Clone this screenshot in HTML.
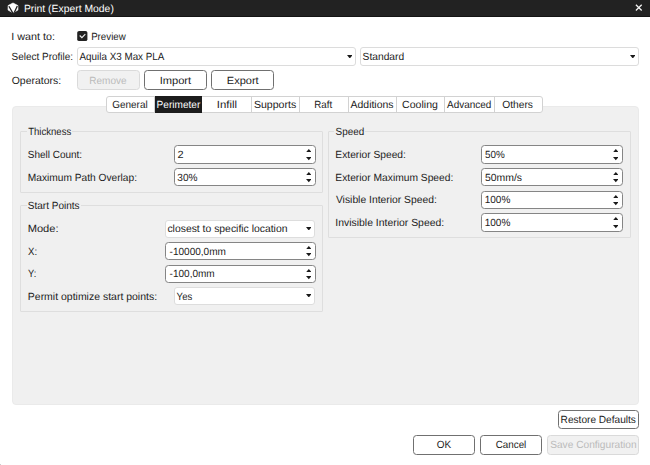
<!DOCTYPE html>
<html><head><meta charset="utf-8"><title>Print (Expert Mode)</title>
<style>
html,body{margin:0;padding:0;}
body{width:650px;height:465px;position:relative;overflow:hidden;background:#fff;font-family:"Liberation Sans","DejaVu Sans",sans-serif;font-size:10.4px;color:#1c1c1c;}
.abs{position:absolute;}
.t{position:absolute;white-space:nowrap;line-height:14px;height:14px;transform-origin:0 50%;text-rendering:geometricPrecision;}
.box{position:absolute;box-sizing:border-box;border:1px solid #cfcfcf;border-radius:3px;background:#fff;}
.box.spin{border-color:#858585;border-radius:3.5px;}
.box.btn{border-color:#707070;border-radius:3.5px;}
.box.btn.dis{border-color:#dadada;background:#f1f1f1;}
.gb{position:absolute;box-sizing:border-box;border:1px solid #dedede;border-radius:1px;}
</style></head><body>
<div class="abs" style="left:0;top:0;width:650px;height:17px;background:#222;border-bottom:1px solid #141414;box-sizing:border-box"></div>
<svg class="abs" style="left:7px;top:2px" width="12" height="12" viewBox="0 0 12 12"><path d="M6 1 L10.9 3.6 L10.9 8.1 L6 10.8 L1.1 8.1 L1.1 3.6 Z" fill="#fff" stroke="#fff" stroke-width="0.7" stroke-linejoin="round"/><path d="M1.9 4.2 L5.7 10.9 L6.6 10.9 M10.3 4.0 L7.3 10.6" fill="none" stroke="#222" stroke-width="1.3"/></svg>
<svg class="abs" style="left:635px;top:4px" width="8" height="8" viewBox="0 0 8 8"><path d="M0.9 0.7 L6.7 6.5 M6.7 0.7 L0.9 6.5" stroke="#f4f4f4" stroke-width="1.25"/></svg>
<svg class="abs" style="left:76px;top:30px" width="14" height="13" viewBox="0 0 14 13"><rect x="1.2" y="0.95" width="10.2" height="10.15" rx="1.9" fill="#222"/><path d="M3.7 5.5 L5.9 7.6 L9.3 4.2" stroke="#ededed" stroke-width="1.15" fill="none"/></svg>
<div class="abs" style="left:0;top:463.6px;width:1.2px;height:1.4px;background:#cdcdcd"></div>
<div class="abs" style="left:12px;top:106px;width:627px;height:298.5px;background:#f0f0f0;border:1px solid #eaeaea;box-sizing:border-box;border-radius:4px"></div>
<div class="abs" style="left:106px;top:96px;width:437px;height:17px;box-sizing:border-box;background:#fff;border:1px solid #d2d2d2;border-radius:3px 3px 3px 3px"></div><div class="abs" style="left:154px;top:97px;width:1px;height:15px;background:#d2d2d2"></div><div class="abs" style="left:251px;top:97px;width:1px;height:15px;background:#d2d2d2"></div><div class="abs" style="left:299px;top:97px;width:1px;height:15px;background:#d2d2d2"></div><div class="abs" style="left:348px;top:97px;width:1px;height:15px;background:#d2d2d2"></div><div class="abs" style="left:396px;top:97px;width:1px;height:15px;background:#d2d2d2"></div><div class="abs" style="left:444px;top:97px;width:1px;height:15px;background:#d2d2d2"></div><div class="abs" style="left:494px;top:97px;width:1px;height:15px;background:#d2d2d2"></div><div class="abs" style="left:155px;top:96px;width:47px;height:17px;background:#1c1c1c"></div>
<div class="gb" style="left:20px;top:131px;width:303px;height:62px"></div><div class="abs" style="left:26.5px;top:130px;width:45.5px;height:3px;background:#f0f0f0"></div>
<div class="gb" style="left:20px;top:205px;width:303px;height:107px"></div><div class="abs" style="left:26.5px;top:204px;width:54px;height:3px;background:#f0f0f0"></div>
<div class="gb" style="left:328px;top:131px;width:303px;height:107px"></div><div class="abs" style="left:334px;top:130px;width:31px;height:3px;background:#f0f0f0"></div>
<div class="box" style="left:77px;top:47px;width:279px;height:19px;border-color:#dcdcdc"></div>
<svg class="abs" style="left:346.5px;top:54.6px" width="5.6" height="3.5" viewBox="0 0 5.6 3.5"><path d="M0 0 L5.6 0 L2.8 3.5 Z" fill="#1a1a1a"/></svg>
<div class="box" style="left:360px;top:47px;width:279px;height:19px;border-color:#dcdcdc"></div>
<svg class="abs" style="left:629.5px;top:54.6px" width="5.6" height="3.5" viewBox="0 0 5.6 3.5"><path d="M0 0 L5.6 0 L2.8 3.5 Z" fill="#1a1a1a"/></svg>
<div class="box btn dis" style="left:77px;top:70px;width:63px;height:20px"></div>
<div class="box btn" style="left:144px;top:70px;width:63px;height:20px"></div>
<div class="box btn" style="left:211px;top:70px;width:63px;height:20px"></div>
<div class="box spin" style="left:174px;top:145px;width:142px;height:19px"></div>
<svg class="abs" style="left:305.9px;top:148.9px" width="5.6" height="3.3" viewBox="0 0 5.6 3.3"><path d="M0 3.3 L5.6 3.3 L2.8 0 Z" fill="#1a1a1a"/></svg>
<svg class="abs" style="left:305.9px;top:157.35px" width="5.6" height="3.2" viewBox="0 0 5.6 3.2"><path d="M0 0 L5.6 0 L2.8 3.2 Z" fill="#1a1a1a"/></svg>
<div class="box spin" style="left:174px;top:168px;width:142px;height:18px"></div>
<svg class="abs" style="left:305.9px;top:171.5px" width="5.6" height="3.3" viewBox="0 0 5.6 3.3"><path d="M0 3.3 L5.6 3.3 L2.8 0 Z" fill="#1a1a1a"/></svg>
<svg class="abs" style="left:305.9px;top:179.35px" width="5.6" height="3.2" viewBox="0 0 5.6 3.2"><path d="M0 0 L5.6 0 L2.8 3.2 Z" fill="#1a1a1a"/></svg>
<div class="box" style="left:165px;top:220px;width:150px;height:18px;border-color:#dddddd"></div>
<svg class="abs" style="left:305.5px;top:226.6px" width="5.6" height="3.5" viewBox="0 0 5.6 3.5"><path d="M0 0 L5.6 0 L2.8 3.5 Z" fill="#1a1a1a"/></svg>
<div class="box spin" style="left:165px;top:242px;width:151px;height:18px"></div>
<svg class="abs" style="left:305.9px;top:245.5px" width="5.6" height="3.3" viewBox="0 0 5.6 3.3"><path d="M0 3.3 L5.6 3.3 L2.8 0 Z" fill="#1a1a1a"/></svg>
<svg class="abs" style="left:305.9px;top:253.35px" width="5.6" height="3.2" viewBox="0 0 5.6 3.2"><path d="M0 0 L5.6 0 L2.8 3.2 Z" fill="#1a1a1a"/></svg>
<div class="box spin" style="left:165px;top:265px;width:151px;height:18px"></div>
<svg class="abs" style="left:305.9px;top:268.5px" width="5.6" height="3.3" viewBox="0 0 5.6 3.3"><path d="M0 3.3 L5.6 3.3 L2.8 0 Z" fill="#1a1a1a"/></svg>
<svg class="abs" style="left:305.9px;top:276.35px" width="5.6" height="3.2" viewBox="0 0 5.6 3.2"><path d="M0 0 L5.6 0 L2.8 3.2 Z" fill="#1a1a1a"/></svg>
<div class="box" style="left:174px;top:287px;width:141px;height:18px;border-color:#dddddd"></div>
<svg class="abs" style="left:305.5px;top:293.6px" width="5.6" height="3.5" viewBox="0 0 5.6 3.5"><path d="M0 0 L5.6 0 L2.8 3.5 Z" fill="#1a1a1a"/></svg>
<div class="box spin" style="left:481px;top:145px;width:142px;height:19px"></div>
<svg class="abs" style="left:612.9px;top:148.9px" width="5.6" height="3.3" viewBox="0 0 5.6 3.3"><path d="M0 3.3 L5.6 3.3 L2.8 0 Z" fill="#1a1a1a"/></svg>
<svg class="abs" style="left:612.9px;top:157.35px" width="5.6" height="3.2" viewBox="0 0 5.6 3.2"><path d="M0 0 L5.6 0 L2.8 3.2 Z" fill="#1a1a1a"/></svg>
<div class="box spin" style="left:481px;top:168px;width:142px;height:18px"></div>
<svg class="abs" style="left:612.9px;top:171.5px" width="5.6" height="3.3" viewBox="0 0 5.6 3.3"><path d="M0 3.3 L5.6 3.3 L2.8 0 Z" fill="#1a1a1a"/></svg>
<svg class="abs" style="left:612.9px;top:179.35px" width="5.6" height="3.2" viewBox="0 0 5.6 3.2"><path d="M0 0 L5.6 0 L2.8 3.2 Z" fill="#1a1a1a"/></svg>
<div class="box spin" style="left:481px;top:191px;width:142px;height:18px"></div>
<svg class="abs" style="left:612.9px;top:194.5px" width="5.6" height="3.3" viewBox="0 0 5.6 3.3"><path d="M0 3.3 L5.6 3.3 L2.8 0 Z" fill="#1a1a1a"/></svg>
<svg class="abs" style="left:612.9px;top:202.35px" width="5.6" height="3.2" viewBox="0 0 5.6 3.2"><path d="M0 0 L5.6 0 L2.8 3.2 Z" fill="#1a1a1a"/></svg>
<div class="box spin" style="left:481px;top:213px;width:142px;height:19px"></div>
<svg class="abs" style="left:612.9px;top:216.9px" width="5.6" height="3.3" viewBox="0 0 5.6 3.3"><path d="M0 3.3 L5.6 3.3 L2.8 0 Z" fill="#1a1a1a"/></svg>
<svg class="abs" style="left:612.9px;top:225.35px" width="5.6" height="3.2" viewBox="0 0 5.6 3.2"><path d="M0 0 L5.6 0 L2.8 3.2 Z" fill="#1a1a1a"/></svg>
<div class="box btn" style="left:558px;top:410px;width:81px;height:19px"></div>
<div class="box btn" style="left:413px;top:435px;width:62px;height:20px"></div>
<div class="box btn" style="left:480px;top:435px;width:62px;height:20px"></div>
<div class="box btn dis" style="left:547px;top:435px;width:92px;height:20px"></div>
<div class="t" style="left:0;top:3px;transform:translateX(23.89px) scaleX(0.9985);color:#fff;">Print (Expert Mode)</div>
<div class="t" style="left:0;top:31px;transform:translateX(11.24px) scaleX(1.0350);">I want to:</div>
<div class="t" style="left:0;top:31px;transform:translateX(91.13px) scaleX(0.9365);">Preview</div>
<div class="t" style="left:0;top:51px;transform:translateX(11.56px) scaleX(0.9599);">Select Profile:</div>
<div class="t" style="left:0;top:51px;transform:translateX(79.54px) scaleX(0.9477);">Aquila X3 Max PLA</div>
<div class="t" style="left:0;top:51px;transform:translateX(362.55px) scaleX(0.9872);">Standard</div>
<div class="t" style="left:0;top:75px;transform:translateX(11.73px) scaleX(1.0058);">Operators:</div>
<div class="t" style="left:0;top:75px;transform:translateX(89.29px) scaleX(0.9645);color:#bbbbbb;">Remove</div>
<div class="t" style="left:0;top:75px;transform:translateX(159.64px) scaleX(1.0696);">Import</div>
<div class="t" style="left:0;top:75px;transform:translateX(226.85px) scaleX(1.0600);">Export</div>
<div class="t" style="left:0;top:99px;transform:translateX(112.24px) scaleX(0.9573);">General</div>
<div class="t" style="left:0;top:99px;transform:translateX(156.58px) scaleX(0.9693);color:#fff;">Perimeter</div>
<div class="t" style="left:0;top:99px;transform:translateX(216.78px) scaleX(1.0917);">Infill</div>
<div class="t" style="left:0;top:99px;transform:translateX(253.90px) scaleX(1.0175);">Supports</div>
<div class="t" style="left:0;top:99px;transform:translateX(314.31px) scaleX(0.9371);">Raft</div>
<div class="t" style="left:0;top:99px;transform:translateX(350.54px) scaleX(1.0059);">Additions</div>
<div class="t" style="left:0;top:99px;transform:translateX(402.11px) scaleX(1.0143);">Cooling</div>
<div class="t" style="left:0;top:99px;transform:translateX(447.01px) scaleX(0.9582);">Advanced</div>
<div class="t" style="left:0;top:99px;transform:translateX(502.17px) scaleX(0.9870);">Others</div>
<div class="t" style="left:0;top:126px;transform:translateX(28.18px) scaleX(0.9198);">Thickness</div>
<div class="t" style="left:0;top:149px;transform:translateX(27.86px) scaleX(0.9586);">Shell Count:</div>
<div class="t" style="left:0;top:149px;transform:translateX(177.49px) scaleX(1.0551);">2</div>
<div class="t" style="left:0;top:172px;transform:translateX(27.73px) scaleX(0.9801);">Maximum Path Overlap:</div>
<div class="t" style="left:0;top:172px;transform:translateX(177.31px) scaleX(0.9722);">30%</div>
<div class="t" style="left:0;top:200px;transform:translateX(27.84px) scaleX(0.9625);">Start Points</div>
<div class="t" style="left:0;top:223px;transform:translateX(27.63px) scaleX(1.0717);">Mode:</div>
<div class="t" style="left:0;top:223px;transform:translateX(167.42px) scaleX(0.9990);">closest to specific location</div>
<div class="t" style="left:0;top:246px;transform:translateX(28.02px) scaleX(0.9259);">X:</div>
<div class="t" style="left:0;top:246px;transform:translateX(169.59px) scaleX(0.9657);">-10000,0mm</div>
<div class="t" style="left:0;top:268px;transform:translateX(28.01px) scaleX(0.8973);">Y:</div>
<div class="t" style="left:0;top:268px;transform:translateX(169.62px) scaleX(0.9630);">-100,0mm</div>
<div class="t" style="left:0;top:291px;transform:translateX(27.82px) scaleX(1.0083);">Permit optimize start points:</div>
<div class="t" style="left:0;top:291px;transform:translateX(176.62px) scaleX(0.9239);">Yes</div>
<div class="t" style="left:0;top:126px;transform:translateX(335.58px) scaleX(0.9542);">Speed</div>
<div class="t" style="left:0;top:149px;transform:translateX(335.34px) scaleX(0.9851);">Exterior Speed:</div>
<div class="t" style="left:0;top:149px;transform:translateX(485.02px) scaleX(0.9516);">50%</div>
<div class="t" style="left:0;top:172px;transform:translateX(335.34px) scaleX(0.9871);">Exterior Maximum Speed:</div>
<div class="t" style="left:0;top:172px;transform:translateX(484.97px) scaleX(1.0038);">50mm/s</div>
<div class="t" style="left:0;top:194px;transform:translateX(335.92px) scaleX(0.9942);">Visible Interior Speed:</div>
<div class="t" style="left:0;top:194px;transform:translateX(484.70px) scaleX(0.9666);">100%</div>
<div class="t" style="left:0;top:217px;transform:translateX(335.33px) scaleX(1.0021);">Invisible Interior Speed:</div>
<div class="t" style="left:0;top:217px;transform:translateX(484.70px) scaleX(0.9666);">100%</div>
<div class="t" style="left:0;top:414px;transform:translateX(560.60px) scaleX(0.9732);">Restore Defaults</div>
<div class="t" style="left:0;top:439px;transform:translateX(436.80px) scaleX(0.9611);">OK</div>
<div class="t" style="left:0;top:439px;transform:translateX(495.73px) scaleX(0.9450);">Cancel</div>
<div class="t" style="left:0;top:439px;transform:translateX(550.13px) scaleX(0.9785);color:#bbbbbb;">Save Configuration</div>
</body></html>
